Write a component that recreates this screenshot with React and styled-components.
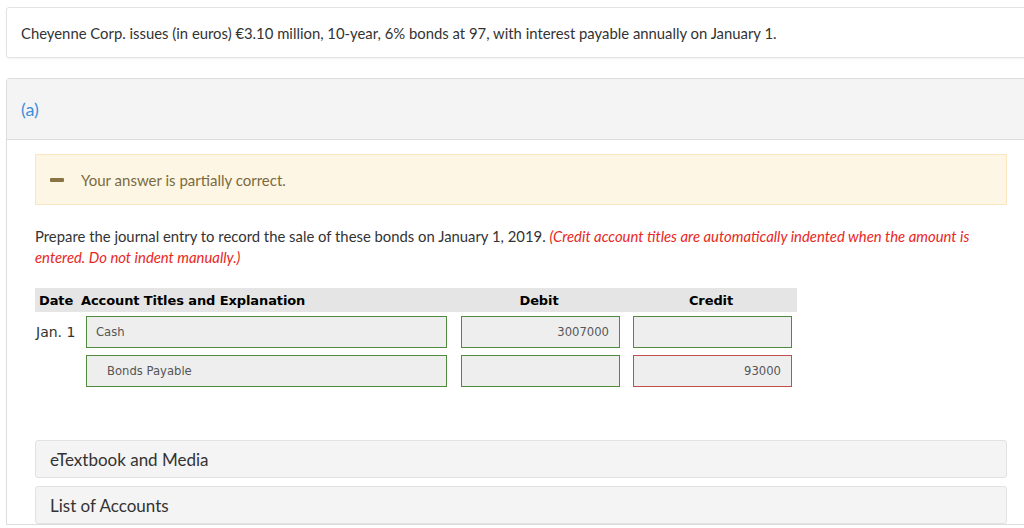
import React from "react";
import styled, { createGlobalStyle } from "styled-components";

const GlobalStyle = createGlobalStyle`
  html, body {
    margin: 0;
    padding: 0;
    background: #fff;
    overflow: hidden;
  }
  body {
    font-family: Lato, "Open Sans", sans-serif;
    color: #333;
  }
`;

const Page = styled.div`
  padding: 7px 0 0 6px;
  width: 1030px;
`;

const QuestionCard = styled.div`
  border: 1px solid #e3e3e3;
  border-radius: 3px;
  box-shadow: 0 1px 2px rgba(0, 0, 0, 0.05);
  height: 49px;
  padding: 0 14px;
  display: flex;
  align-items: center;
  font-size: 14.85px;
  color: #333;
  margin-bottom: 20px;
`;

const Section = styled.div`
  border: 1px solid #ddd;
  border-radius: 3px 3px 0 0;
`;

const SectionHeader = styled.div`
  background: #f4f4f4;
  border-bottom: 1px solid #ddd;
  height: 60px;
  padding: 0 14px;
  display: flex;
  align-items: center;
  font-size: 18px;
  color: #3b8fd9;
`;

const SectionBody = styled.div`
  padding: 14px 28px 0 28px;
`;

const Alert = styled.div`
  width: 972px;
  height: 51px;
  box-sizing: border-box;
  background: #fdf6e4;
  border: 1px solid #f8e7c0;
  display: flex;
  align-items: center;
  padding-left: 14px;
  gap: 17px;
  font-size: 15px;
  color: #7b6a3f;
`;

const Dash = styled.span`
  width: 14px;
  height: 4px;
  border-radius: 1px;
  background: #8a7443;
`;

const Prompt = styled.p`
  margin: 21px 0 0 0;
  width: 972px;
  font-size: 14.85px;
  line-height: 21px;
  color: #333;
`;

const Note = styled.em`
  color: #e8281e;
`;

const Table = styled.div`
  margin-top: 20px;
  width: 762px;
  font-family: "DejaVu Sans", Verdana, sans-serif;
`;

const HeaderRow = styled.div`
  display: grid;
  grid-template-columns: 42px 372px 172px 172px;
  height: 24px;
  align-items: center;
  background: #e5e5e5;
  font-weight: bold;
  font-size: 13px;
  letter-spacing: -0.1px;
  color: #000;
  padding-left: 4px;
`;

const HeadCell = styled.div`
  text-align: ${(p) => (p.$center ? "center" : "left")};
  white-space: nowrap;
`;

const Row = styled.div`
  display: grid;
  grid-template-columns: 51px 361px 14px 159px 13px 159px;
  align-items: center;
  margin-top: ${(p) => (p.$first ? "4px" : "7px")};
`;

const DateCell = styled.div`
  font-size: 14px;
  color: #333;
  padding-left: 1px;
`;

const Field = styled.div`
  grid-column: ${(p) => p.$col};
  height: 32px;
  box-sizing: border-box;
  background: #eee;
  border: 1px solid ${(p) => (p.$wrong ? "#c0504d" : "#4f8a3f")};
  display: flex;
  align-items: center;
  justify-content: ${(p) => (p.$right ? "flex-end" : "flex-start")};
  padding: 0 10px 0 ${(p) => (p.$indent ? "20px" : "9px")};
  font-size: 11.6px;
  color: #555;
`;

const Panel = styled.div`
  width: 972px;
  height: 38px;
  box-sizing: border-box;
  background: #f4f4f4;
  border: 1px solid #e2e2e2;
  border-radius: 3px;
  display: flex;
  align-items: center;
  padding-left: 14px;
  font-size: 17px;
  color: #333;
  margin-top: ${(p) => p.$mt}px;
`;

export default function App() {
  return (
    <>
      <GlobalStyle />
      <Page>
        <QuestionCard>
          Cheyenne Corp. issues (in euros) €3.10 million, 10-year, 6% bonds at 97, with interest payable annually on January 1.
        </QuestionCard>
        <Section>
          <SectionHeader>(a)</SectionHeader>
          <SectionBody>
            <Alert>
              <Dash />
              Your answer is partially correct.
            </Alert>
            <Prompt>
              Prepare the journal entry to record the sale of these bonds on January 1, 2019.{" "}
              <Note>
                (Credit account titles are automatically indented when the amount is entered. Do not indent manually.)
              </Note>
            </Prompt>
            <Table>
              <HeaderRow>
                <HeadCell>Date</HeadCell>
                <HeadCell>Account Titles and Explanation</HeadCell>
                <HeadCell $center>Debit</HeadCell>
                <HeadCell $center>Credit</HeadCell>
              </HeaderRow>
              <Row $first>
                <DateCell>Jan. 1</DateCell>
                <Field $col={2}>Cash</Field>
                <Field $col={4} $right>3007000</Field>
                <Field $col={6} />
              </Row>
              <Row>
                <Field $col={2} $indent>Bonds Payable</Field>
                <Field $col={4} />
                <Field $col={6} $right $wrong>93000</Field>
              </Row>
            </Table>
            <Panel $mt={53}>eTextbook and Media</Panel>
            <Panel $mt={8}>List of Accounts</Panel>
          </SectionBody>
        </Section>
      </Page>
    </>
  );
}
